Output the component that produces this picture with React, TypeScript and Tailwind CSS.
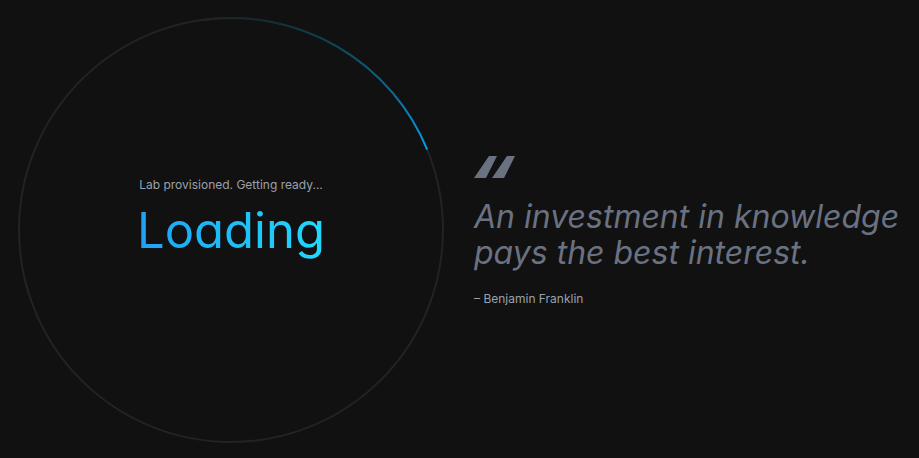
function ProgressRing() {
  return (
    <svg
      viewBox="0 0 426 426"
      className="col-start-1 row-start-1 w-full"
      fill="none"
      strokeWidth="2"
      aria-hidden="true"
    >
      <defs>
        <linearGradient id="arc" gradientUnits="userSpaceOnUse" x1="185" y1="2" x2="409" y2="133">
          <stop offset="0" stopColor="#232323" />
          <stop offset="0.2" stopColor="#15292f" />
          <stop offset="0.45" stopColor="#0b4253" />
          <stop offset="0.75" stopColor="#086790" />
          <stop offset="1" stopColor="#069ce4" />
        </linearGradient>
      </defs>
      <circle cx="213" cy="213" r="212" stroke="#232323" />
      <path d="M185 2.9A212 212 0 0 1 409.2 132.7" stroke="url(#arc)" />
    </svg>
  );
}

function LoadingStatus() {
  return (
    <section className="grid w-[426px] shrink-0 place-items-center" role="status">
      <ProgressRing />
      <div className="col-start-1 row-start-1 flex flex-col items-center">
        <p className="text-[12px] leading-4 text-gray-400">Lab provisioned. Getting ready...</p>
        <h1 className="bg-linear-to-r from-[#1fa2f4] to-[#22d9fc] bg-clip-text pt-2 pb-[22px] text-[49px] leading-[60px] font-normal text-transparent [font-feature-settings:'cv11']">
          Loading
        </h1>
      </div>
    </section>
  );
}

function Quote() {
  return (
    <figure className="min-w-0 flex-1 pt-[3px]">
      <svg width="41" height="22" viewBox="0 0 41 22" className="text-gray-500" fill="currentColor" aria-hidden="true">
        <path d="M15 0H23L12 22H0ZM33 0H41L30 22H18Z" />
      </svg>
      <blockquote className="mt-[21px] text-[32px] leading-9 font-normal text-gray-500 italic [font-feature-settings:'cv11']">
        <p>
          An investment in knowledge
          <br />
          pays the best interest.
        </p>
      </blockquote>
      <figcaption className="mt-5 text-[12px] leading-4 text-gray-400">– Benjamin Franklin</figcaption>
    </figure>
  );
}

export default function App() {
  return (
    <main className="flex min-h-screen items-center gap-[30px] bg-[#111111] pt-[2px] pl-[18px] font-['Inter',sans-serif]">
      <LoadingStatus />
      <Quote />
    </main>
  );
}
